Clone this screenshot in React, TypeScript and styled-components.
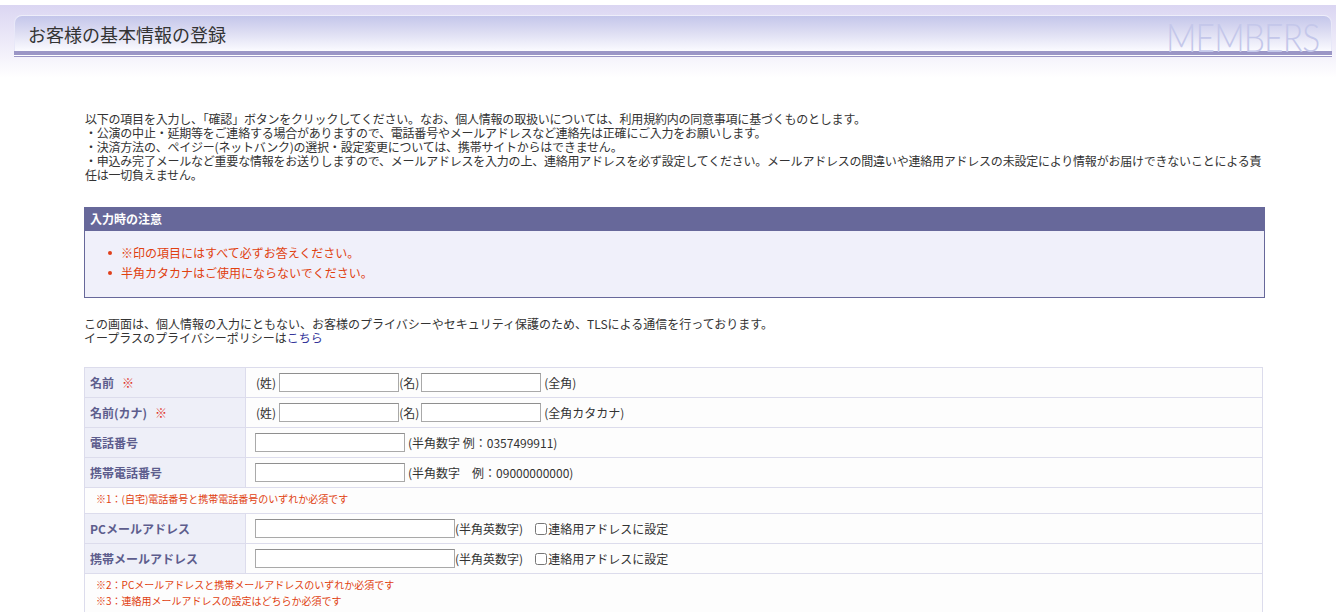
import React from "react";
import styled, { createGlobalStyle } from "styled-components";

const GlobalStyle = createGlobalStyle`
  html, body { margin: 0; padding: 0; background: #fff; }
  body {
    font-family: "Noto Sans CJK JP", "Noto Sans", sans-serif;
    font-size: 12px;
    color: #333;
  }
  * { box-sizing: border-box; }
`;

const Page = styled.div`
  padding-top: 5px;
  width: 1336px;
`;

const HeaderBand = styled.header`
  height: 73px;
  padding: 10px 4px 0 14px;
  background: linear-gradient(to bottom, #dbd6f2 0%, #ebe8f8 45%, #ffffff 100%);
`;

const HeaderBox = styled.div`
  height: 36px;
  border-radius: 8px 8px 0 0;
  border-top: 1px solid #eeeefa;
  border-left: 1px solid #e8e8f8;
  border-right: 1px solid #e8e8f8;
  background: linear-gradient(to bottom, #c4c6ea 0%, #dcdcf2 45%, #fbfbff 100%);
  display: flex;
  align-items: center;
  justify-content: space-between;
  padding: 0 12px 0 13px;
`;

const Title = styled.h1`
  margin: 0;
  font-size: 18px;
  font-weight: 400;
  color: #333;
  line-height: 1;
  padding-top: 1px;
`;

const Brand = styled.span`
  font-family: "Lato", "Open Sans", sans-serif;
  font-weight: 300;
  font-size: 39px;
  letter-spacing: -1px;
  color: #c4c7ea;
  line-height: 36px;
  height: 36px;
  padding-top: 3px;
  transform: scaleX(0.86);
  transform-origin: right center;
  white-space: nowrap;
`;

const HeaderRule = styled.div`
  height: 6px;
  background: linear-gradient(
    to bottom,
    #9b96c6 0px,
    #9b96c6 4px,
    #ffffff 4px,
    #ffffff 5px,
    #9b96c6 5px,
    #9b96c6 6px
  );
`;

const Content = styled.main`
  margin-left: 84px;
  width: 1181px;
  padding-top: 34px;
  padding-bottom: 40px;
`;

const Intro = styled.p`
  margin: 0 0 0 1px;
  line-height: 14px;
  letter-spacing: -0.22px;
`;

const Notice = styled.section`
  margin-top: 25px;
`;

const NoticeHead = styled.h2`
  margin: 0;
  height: 24px;
  line-height: 24px;
  padding-left: 6px;
  background: #67689a;
  color: #fff;
  font-size: 12px;
  font-weight: 700;
`;

const NoticeBody = styled.div`
  height: 67px;
  border: 1px solid #67689a;
  border-top: none;
  background: #f0f0fa;
  padding-top: 12px;
`;

const NoticeList = styled.ul`
  margin: 0;
  padding-left: 36px;
  list-style: none;
`;

const NoticeItem = styled.li`
  position: relative;
  line-height: 20px;
  color: #e0400f;
  &::before {
    content: "";
    position: absolute;
    left: -13px;
    top: 8px;
    width: 4px;
    height: 4px;
    border-radius: 50%;
    background: #e0401a;
  }
`;

const Privacy = styled.p`
  margin: 19px 0 0 0;
  line-height: 14px;
`;

const Link = styled.a`
  color: #333399;
  text-decoration: none;
`;

const Form = styled.table`
  margin-top: 22px;
  width: 1179px;
  border-collapse: collapse;
  border: 1px solid #dcdcec;
`;

const Row = styled.tr<{ $h?: number }>`
  height: ${(p) => p.$h ?? 30}px;
`;

const Label = styled.th`
  width: 161px;
  background: #eeeff8;
  border: 1px solid #dcdcec;
  text-align: left;
  padding: 0 0 0 5px;
  font-weight: 700;
  color: #5d5d8d;
  font-size: 12px;
`;

const Req = styled.span`
  color: #e0301f;
  margin-left: 8px;
  font-weight: 900;
`;

const Cell = styled.td`
  border: 1px solid #dcdcec;
  background: #fdfdfd;
  padding: 0 0 0 9px;
`;

const Inline = styled.div`
  display: flex;
  align-items: center;
  white-space: nowrap;
`;

const Part = styled.span<{ $gap?: number }>`
  display: inline-flex;
  align-items: center;
  margin-left: ${(p) => p.$gap ?? 0}px;
  color: #333;
`;

const TextBox = styled.input<{ $w: number }>`
  width: ${(p) => p.$w}px;
  height: 19px;
  margin: 0;
  padding: 0 2px;
  border: 1px solid #a9a9a9;
  border-top-color: #8f8f8f;
  background: #fff;
  font: inherit;
`;

const Check = styled.input`
  width: 12px;
  height: 12px;
  margin: 0 1px 0 12px;
  accent-color: #888;
`;

const NoteCell = styled.td`
  border: 1px solid #dcdcec;
  background: #fdfdfd;
  padding: 3px 0 3px 11px;
  color: #e0400f;
  font-size: 10px;
  line-height: 16px;
  vertical-align: top;
`;

export default function App() {
  return (
    <>
      <GlobalStyle />
      <Page>
        <HeaderBand>
          <HeaderBox>
            <Title>お客様の基本情報の登録</Title>
            <Brand>MEMBERS</Brand>
          </HeaderBox>
          <HeaderRule />
        </HeaderBand>
        <Content>
          <Intro>
            以下の項目を入力し、「確認」ボタンをクリックしてください。なお、個人情報の取扱いについては、利用規約内の同意事項に基づくものとします。
            <br />
            ・公演の中止・延期等をご連絡する場合がありますので、電話番号やメールアドレスなど連絡先は正確にご入力をお願いします。
            <br />
            ・決済方法の、ペイジー(ネットバンク)の選択・設定変更については、携帯サイトからはできません。
            <br />
            ・申込み完了メールなど重要な情報をお送りしますので、メールアドレスを入力の上、連絡用アドレスを必ず設定してください。メールアドレスの間違いや連絡用アドレスの未設定により情報がお届けできないことによる責任は一切負えません。
          </Intro>

          <Notice>
            <NoticeHead>入力時の注意</NoticeHead>
            <NoticeBody>
              <NoticeList>
                <NoticeItem>※印の項目にはすべて必ずお答えください。</NoticeItem>
                <NoticeItem>半角カタカナはご使用にならないでください。</NoticeItem>
              </NoticeList>
            </NoticeBody>
          </Notice>

          <Privacy>
            この画面は、個人情報の入力にともない、お客様のプライバシーやセキュリティ保護のため、TLSによる通信を行っております。
            <br />
            イープラスのプライバシーポリシーは<Link href="#">こちら</Link>
          </Privacy>

          <Form>
            <tbody>
              <Row>
                <Label>
                  名前<Req>※</Req>
                </Label>
                <Cell>
                  <Inline>
                    <Part $gap={1}>(姓)</Part>
                    <Part $gap={3}>
                      <TextBox $w={120} />
                    </Part>
                    <Part>(名)</Part>
                    <Part $gap={2}>
                      <TextBox $w={120} />
                    </Part>
                    <Part $gap={3}>(全角)</Part>
                  </Inline>
                </Cell>
              </Row>
              <Row>
                <Label>
                  名前(カナ)<Req>※</Req>
                </Label>
                <Cell>
                  <Inline>
                    <Part $gap={1}>(姓)</Part>
                    <Part $gap={3}>
                      <TextBox $w={120} />
                    </Part>
                    <Part>(名)</Part>
                    <Part $gap={2}>
                      <TextBox $w={120} />
                    </Part>
                    <Part $gap={3}>(全角カタカナ)</Part>
                  </Inline>
                </Cell>
              </Row>
              <Row>
                <Label>電話番号</Label>
                <Cell>
                  <Inline>
                    <TextBox $w={150} />
                    <Part $gap={3}>(半角数字 例：0357499911)</Part>
                  </Inline>
                </Cell>
              </Row>
              <Row>
                <Label>携帯電話番号</Label>
                <Cell>
                  <Inline>
                    <TextBox $w={150} />
                    <Part $gap={3}>(半角数字　例：09000000000)</Part>
                  </Inline>
                </Cell>
              </Row>
              <Row $h={26}>
                <NoteCell colSpan={2}>※1：(自宅)電話番号と携帯電話番号のいずれか必須です</NoteCell>
              </Row>
              <Row>
                <Label>PCメールアドレス</Label>
                <Cell>
                  <Inline>
                    <TextBox $w={200} />
                    <Part>(半角英数字)</Part>
                    <Check type="checkbox" />
                    <Part>連絡用アドレスに設定</Part>
                  </Inline>
                </Cell>
              </Row>
              <Row>
                <Label>携帯メールアドレス</Label>
                <Cell>
                  <Inline>
                    <TextBox $w={200} />
                    <Part>(半角英数字)</Part>
                    <Check type="checkbox" />
                    <Part>連絡用アドレスに設定</Part>
                  </Inline>
                </Cell>
              </Row>
              <Row $h={44}>
                <NoteCell colSpan={2}>
                  ※2：PCメールアドレスと携帯メールアドレスのいずれか必須です
                  <br />
                  ※3：連絡用メールアドレスの設定はどちらか必須です
                </NoteCell>
              </Row>
            </tbody>
          </Form>
        </Content>
      </Page>
    </>
  );
}
